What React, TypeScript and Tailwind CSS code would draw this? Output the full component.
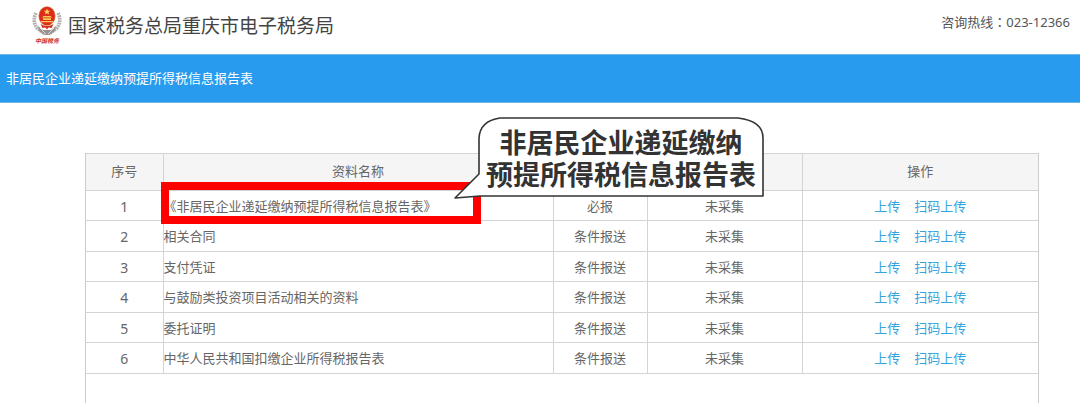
const rows = [
  { name: "《非居民企业递延缴纳预提所得税信息报告表》", type: "必报" },
  { name: "相关合同", type: "条件报送" },
  { name: "支付凭证", type: "条件报送" },
  { name: "与鼓励类投资项目活动相关的资料", type: "条件报送" },
  { name: "委托证明", type: "条件报送" },
  { name: "中华人民共和国扣缴企业所得税报告表", type: "条件报送" },
];

const Logo = () => (
  <svg width="30" height="40" viewBox="0 0 30 40" className="shrink-0">
    {/* wheat ears on both sides */}
    <path d="M4 7 Q0 15 5 22 L13 28 M26 7 Q30 15 25 22 L17 28" fill="none" stroke="#b5aeaa" strokeWidth="3.6" strokeDasharray="1.8 0.7" />
    <path d="M6 20 L11 24 H19 L24 20 L23 25 L17 29 H13 L7 25 Z" fill="#98928f" />
    <path d="M8 22 L14 28 M22 22 L16 28" stroke="#eeeae8" strokeWidth="0.8" />
    {/* national emblem */}
    <ellipse cx="15" cy="10" rx="8.6" ry="9.8" fill="#e0a868" />
    <ellipse cx="15" cy="10" rx="8" ry="9.2" fill="#dc2a1c" />
    <path d="M15 2.4 L15.9 4.7 L18.3 4.8 L16.4 6.3 L17.1 8.6 L15 7.2 L12.9 8.6 L13.6 6.3 L11.7 4.8 L14.1 4.7 Z" fill="#ffd95a" />
    <path d="M10 11.5 L11.5 10 H18.5 L20 11.5 Z M11 12.2 H19 V14 H11 Z M9 15 H21 V16.2 H9 Z" fill="#f8c94e" />
    <path d="M8.5 18 Q15 22 21.5 18 L19.5 22 L16.5 21.5 L15 23.5 L13.5 21.5 L10.5 22 Z" fill="#d8301f" />
    <text x="3" y="37" fontSize="6" fontWeight="700" fontStyle="italic" fill="#d0301f">
      中国税务
    </text>
  </svg>
);

const Callout = () => (
  <div className="absolute top-[-36px] left-[368px] h-[84px] w-[310px]">
    <svg width="310" height="84" viewBox="0 0 310 84" className="absolute inset-0">
      <path
        d="M46 1 H284 Q309 4 309 21 V79 H26 L1 81 L25 57 V21 Q26 4 46 1 Z"
        fill="#fff"
        stroke="#333"
        strokeWidth="1.6"
        strokeLinejoin="round"
      />
    </svg>
    <p className="relative pt-2.5 pl-6 text-center text-[27px] leading-8 font-bold whitespace-nowrap text-[#333]">
      非居民企业递延缴纳
      <br />
      预提所得税信息报告表
    </p>
  </div>
);

const App = () => {
  return (
    <div className="flex min-h-screen flex-col bg-white text-[13px] text-[#666] font-['Noto_Sans','Noto_Sans_CJK_SC',sans-serif]">
      <header className="flex h-[54px] items-start justify-between pt-1.5 pr-2.5 pl-8">
        <div className="flex items-center gap-1.5">
          <Logo />
          <h1 className="text-[19px] leading-10 text-[#444]">国家税务总局重庆市电子税务局</h1>
        </div>
        <p className="leading-8 text-[#555]">
          咨询热线<span className="font-['Noto_Sans_CJK_TC',sans-serif]">：</span>023-12366
        </p>
      </header>
      <div className="flex h-[49px] items-center border-y border-[#6bb8e8] bg-[#299bee] px-1.5">
        <h2 className="text-white">非居民企业递延缴纳预提所得税信息报告表</h2>
      </div>
      <main className="relative mt-[50px] mr-[41px] ml-[85px] flex-1 border-x border-[#ccc]">
        <table className="w-full table-fixed border-collapse text-center">
          <colgroup>
            <col className="w-[77px]" />
            <col />
            <col className="w-[94px]" />
            <col className="w-[155px]" />
            <col className="w-[236px]" />
          </colgroup>
          <thead>
            <tr className="h-[37px] border-y border-[#d4d4d4] bg-[#f5f5f5]">
              <th className="border-r border-[#d4d4d4] font-normal">序号</th>
              <th className="border-r border-[#d4d4d4] font-normal">资料名称</th>
              <th className="border-r border-[#d4d4d4]"></th>
              <th className="border-r border-[#d4d4d4]"></th>
              <th className="font-normal">操作</th>
            </tr>
          </thead>
          <tbody>
            {rows.map((row, index) => (
              <tr key={row.name} className="border-b border-[#d4d4d4] odd:h-[30px] even:h-[31px]">
                <td className="border-r border-[#d4d4d4] pt-0.5 text-sm">{index + 1}</td>
                <td className="border-r border-[#d4d4d4] pt-0.5 text-left">{row.name}</td>
                <td className="border-r border-[#d4d4d4] pt-0.5">{row.type}</td>
                <td className="border-r border-[#d4d4d4] pt-0.5">未采集</td>
                <td className="pt-0.5">
                  <div className="flex justify-center gap-3.5 text-[#36a3dc]">
                    <a href="#upload">上传</a>
                    <a href="#scan">扫码上传</a>
                  </div>
                </td>
              </tr>
            ))}
          </tbody>
        </table>
        <div className="absolute top-[29px] left-[75px] h-[42px] w-80 border-8 border-[#f00]" />
        <Callout />
      </main>
    </div>
  );
};

export default App;
